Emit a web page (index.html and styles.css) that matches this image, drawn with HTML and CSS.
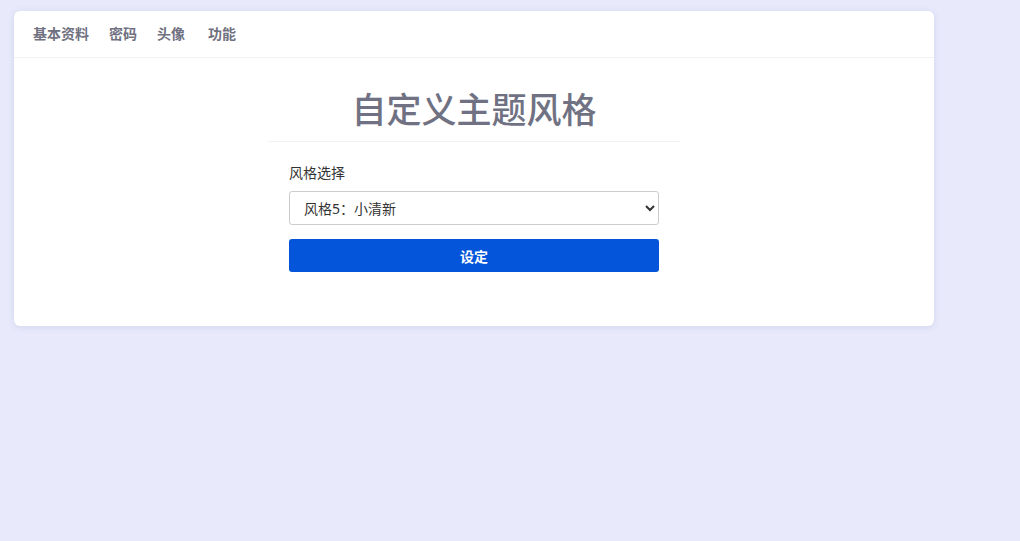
FILE: index.html
```html
<!DOCTYPE html>
<html lang="zh-CN">
<head>
    <meta charset="UTF-8">
    <title>自定义主题风格</title>
    <link rel="stylesheet" href="styles.css">
</head>
<body>

<div class="panel">
    <div class="tabs">
        <a href="#" class="tab">基本资料</a>
        <a href="#" class="tab">密码</a>
        <a href="#" class="tab">头像</a>
        <a href="#" class="tab tab-wide">功能</a>
    </div>
    <div class="content">
        <h1 class="title">自定义主题风格</h1>
        <form class="theme-form" action="">
            <label class="label" for="theme">风格选择</label>
            <select id="theme" class="select">
                <option>风格1：默认</option>
                <option>风格2：暗夜</option>
                <option>风格3：商务</option>
                <option>风格4：活力</option>
                <option selected>风格5：小清新</option>
            </select>
            <input type="button" value="设定" class="btn">
        </form>
    </div>
</div>

</body>
</html>
```

FILE: styles.css
```css
*{margin: 0; padding: 0; box-sizing: border-box;}
html,body{
    height: 100%;
}
body{
    background: #e8eafb;
    font-family: "Noto Sans", "Noto Sans CJK SC", sans-serif;
    font-size: 14px;
    color: #333;
    padding: 11px 86px 0 14px;
}
.panel{
    background: #fff;
    border-radius: 6px;
    box-shadow: 0 1px 6px rgba(140,150,200,0.25);
    height: 315px;
}
.tabs{
    display: flex;
    align-items: center;
    height: 47px;
    padding: 0 19px 3px;
    border-bottom: 1px solid #f1f2f6;
}
.tab{
    font-size: 14px;
    font-weight: bold;
    color: #6f7080;
    text-decoration: none;
    margin-right: 20px;
}
.tab-wide{
    margin-left: 3px;
}
.content{
    display: flex;
    flex-direction: column;
    align-items: center;
    padding-top: 25px;
}
.title{
    width: 412px;
    text-align: center;
    font-size: 35px;
    font-weight: 500;
    line-height: 53px;
    padding-bottom: 5px;
    color: #707283;
    border-bottom: 1px solid #f1f2f6;
}
.theme-form{
    width: 370px;
    display: flex;
    flex-direction: column;
    padding-top: 20px;
}
.label{
    font-size: 14px;
    line-height: 22px;
    color: #333;
    margin-bottom: 7px;
}
.select{
    height: 34px;
    border: 1px solid #ccc;
    border-radius: 3px;
    background: #fff;
    font-family: inherit;
    font-size: 14px;
    color: #333;
    padding: 0 10px;
}
.btn{
    margin-top: 14px;
    height: 33px;
    border: none;
    border-radius: 3px;
    background: #0455d9;
    color: #fff;
    font-family: inherit;
    font-size: 14px;
    font-weight: bold;
    cursor: pointer;
}
```
